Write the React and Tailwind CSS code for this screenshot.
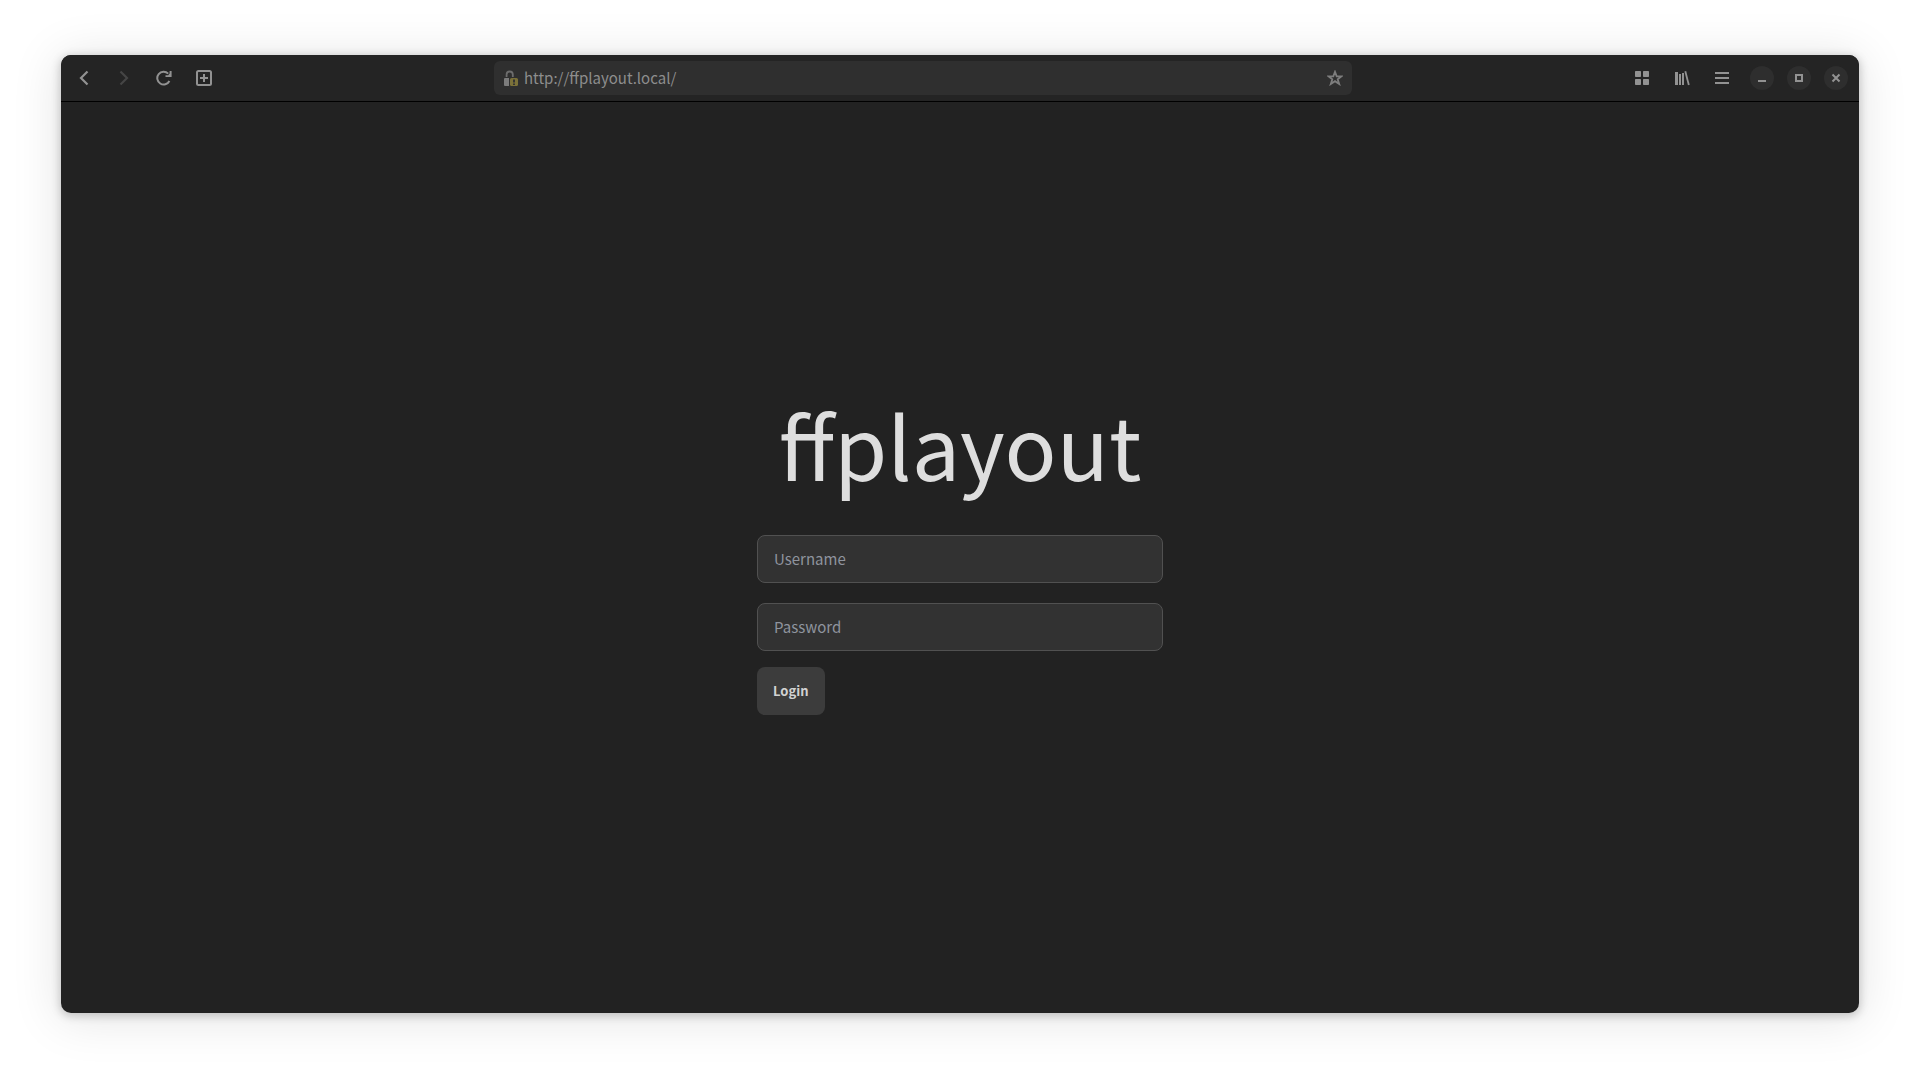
import React from "react";

function Icon({ children, size = 16 }) {
  return (
    <svg width={size} height={size} viewBox="0 0 16 16" fill="none" aria-hidden="true">
      {children}
    </svg>
  );
}

function ToolButton({ label, children, disabled }) {
  return (
    <button
      type="button"
      aria-label={label}
      disabled={disabled}
      className="flex h-8 w-10 items-center justify-center text-[#929292] disabled:text-[#454545]"
    >
      <Icon>{children}</Icon>
    </button>
  );
}

function WindowButton({ label, children }) {
  return (
    <button
      type="button"
      aria-label={label}
      className="flex size-6 items-center justify-center rounded-full bg-[#2e2e2e] text-[#929292]"
    >
      <Icon>{children}</Icon>
    </button>
  );
}

function AddressBar() {
  return (
    <div className="mx-auto flex h-[34px] w-full max-w-[858px] items-center rounded-md bg-[#2f2f2f] px-[9px]">
      <Icon>
        <path d="M3.6 7V4.6a3.1 3.1 0 0 1 6.2 0V7" stroke="#6d6d6d" strokeWidth="1.8" />
        <path d="M1 9a1 1 0 0 1 1-1h4v8H2a1 1 0 0 1-1-1z" fill="#7c7c7c" />
        <rect x="7" y="8" width="8" height="8" rx="1.5" fill="#7b7139" />
        <path d="M10 9.5h2v3h-2zM10 13.5h2v1.5h-2z" fill="#333" />
      </Icon>
      <input
        type="text"
        aria-label="Address"
        defaultValue="http://ffplayout.local/"
        className="min-w-0 flex-1 bg-transparent pl-[5px] text-[15px] text-[#8d8d8d] outline-none"
      />
      <button type="button" aria-label="Bookmark this page" className="text-[#7d7d7d]">
        <Icon>
          <path
            d="M8 1.8l1.7 4.5h4.8l-3.8 3 1.5 4.7L8 11.2 3.8 14l1.5-4.7-3.8-3h4.8z"
            stroke="currentColor"
            strokeWidth="1.8"
          />
        </Icon>
      </button>
    </div>
  );
}

function BrowserHeader() {
  return (
    <header className="flex items-center border-b border-black bg-[#242424] py-[6px] pr-[11px] pl-[3px]">
      <nav aria-label="Navigation" className="flex">
        <ToolButton label="Back">
          <path d="M11.5 1.5L5 8l6.5 6.5" stroke="currentColor" strokeWidth="2.2" />
        </ToolButton>
        <ToolButton label="Forward" disabled>
          <path d="M4.5 1.5L11 8l-6.5 6.5" stroke="currentColor" strokeWidth="2.2" />
        </ToolButton>
        <ToolButton label="Reload">
          <path d="M12.2 3.6A6.4 6.4 0 1 0 13.4 11" stroke="currentColor" strokeWidth="2" />
          <path d="M15.6 1v6H9.5V5.2h2.6L13.6 3.6V1z" fill="currentColor" />
        </ToolButton>
        <ToolButton label="New tab">
          <rect x="1" y="1" width="14" height="14" rx="1.5" stroke="currentColor" strokeWidth="2" />
          <path d="M8 4v8M4 8h8" stroke="currentColor" strokeWidth="2" />
        </ToolButton>
      </nav>
      <div className="flex min-w-0 flex-1">
        <AddressBar />
      </div>
      <div className="flex">
        <ToolButton label="Tab overview">
          <g fill="currentColor">
            <rect x="1" y="1" width="6" height="6" rx="0.8" />
            <rect x="9" y="1" width="6" height="6" rx="0.8" />
            <rect x="1" y="9" width="6" height="6" rx="0.8" />
            <rect x="9" y="9" width="6" height="6" rx="0.8" />
          </g>
        </ToolButton>
        <ToolButton label="Library">
          <path d="M1 2h3v13H1zM5 4h2v11H5zM8 3h2v12H8z" fill="currentColor" />
          <path d="M11.3 1.2L14.8 15" stroke="currentColor" strokeWidth="1.8" />
        </ToolButton>
        <ToolButton label="Menu">
          <path d="M1 3h14M1 8h14M1 13h14" stroke="currentColor" strokeWidth="2" />
        </ToolButton>
      </div>
      <div className="ml-2 flex gap-[13px]">
        <WindowButton label="Minimize">
          <path d="M4 11h8" stroke="currentColor" strokeWidth="2" />
        </WindowButton>
        <WindowButton label="Maximize">
          <rect x="5" y="5" width="6" height="6" stroke="currentColor" strokeWidth="2" />
        </WindowButton>
        <WindowButton label="Close">
          <path d="M4.5 4.5l7 7M11.5 4.5l-7 7" stroke="currentColor" strokeWidth="2" />
        </WindowButton>
      </div>
    </header>
  );
}

const field =
  "h-12 w-full rounded-lg border border-[#515151] bg-[#323232] px-4 text-[15px] text-[#dedede] outline-none placeholder:text-[#8f949e]";

function LoginPage() {
  return (
    <main className="flex flex-1 flex-col items-center justify-center pb-[6px]">
      <form className="flex w-[406px] flex-col" onSubmit={(e) => e.preventDefault()}>
        <h1 className="mb-[42px] text-center text-[86px] leading-[98px] text-[#dedede]">ffplayout</h1>
        <input type="text" aria-label="Username" placeholder="Username" className={field} />
        <input type="password" aria-label="Password" placeholder="Password" className={"mt-5 " + field} />
        <button
          type="submit"
          className="mt-4 h-12 self-start rounded-lg bg-[#3c3c3c] px-4 text-[13px] font-semibold text-[#d2d2d2]"
        >
          Login
        </button>
      </form>
    </main>
  );
}

export default function App() {
  return (
    <div className="flex min-h-screen bg-white px-[61px] pt-[55px] pb-[67px] font-['Noto_Sans_CJK_SC',sans-serif]">
      <div className="flex flex-1 flex-col overflow-hidden rounded-[10px] bg-[#222222] shadow-[0_2px_10px_1px_rgba(0,0,0,0.2),0_4px_48px_4px_rgba(0,0,0,0.1)]">
        <BrowserHeader />
        <LoginPage />
      </div>
    </div>
  );
}
